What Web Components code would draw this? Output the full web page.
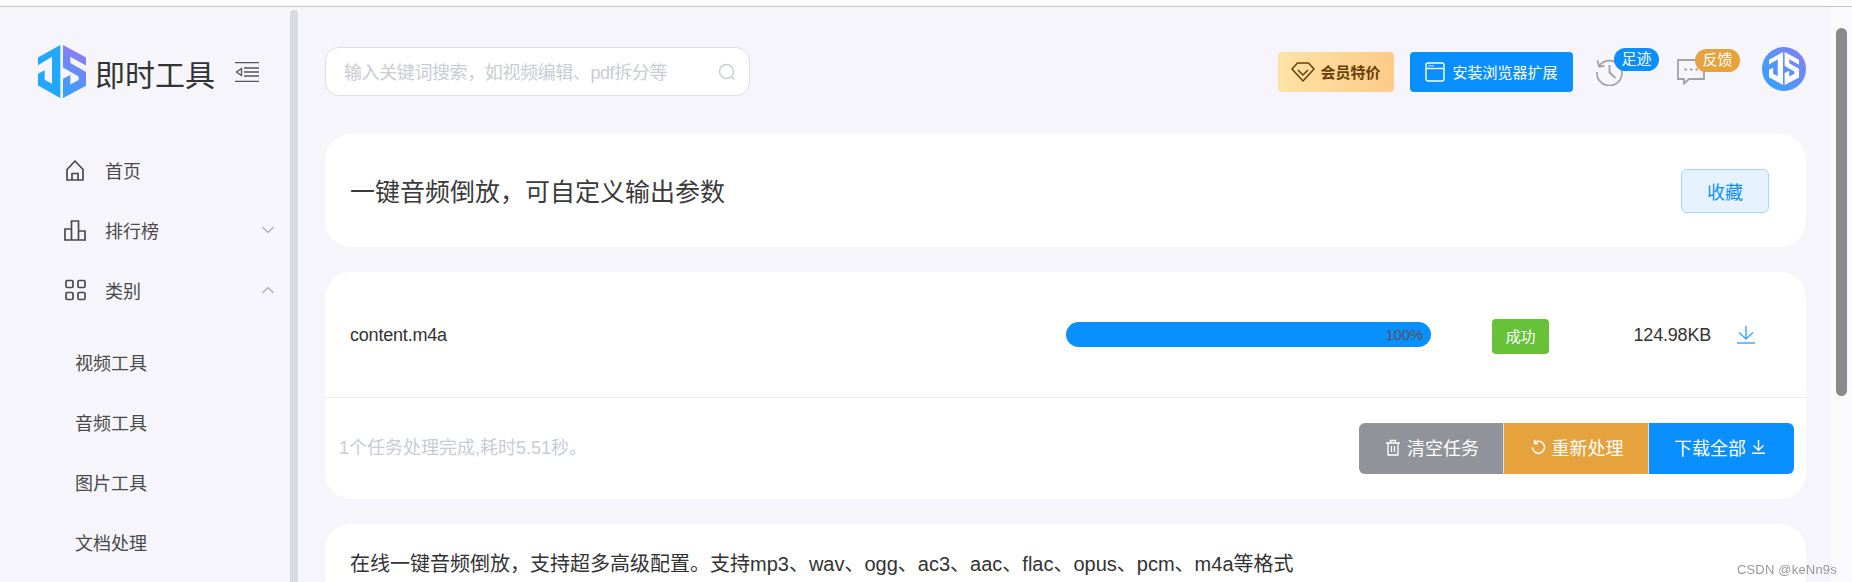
<!DOCTYPE html>
<html lang="zh-CN">
<head>
<meta charset="utf-8">
<title>一键音频倒放</title>
<style>
  html, body { margin: 0; height: 100%; overflow: hidden; }
  body { background: #f5f5fb; font-family: "Liberation Sans", "Noto Sans CJK SC", sans-serif; color: #333; }
</style>
</head>
<body>
<tool-app></tool-app>
<csdn-mark>CSDN @keNn9s</csdn-mark>

<script>
const ICONS = {
  home: '<svg width="24" height="24" viewBox="0 0 24 24" fill="none" stroke="currentColor" stroke-width="1.7"><path d="M4 11.5 12 3l8 8.5V22H4z" stroke-linejoin="round"/><path d="M9 22v-6.5h6V22"/></svg>',
  chart: '<svg width="24" height="24" viewBox="0 0 24 24" fill="none" stroke="currentColor" stroke-width="1.7"><path d="M2 11h6.5v11H2zM8.5 3h7v19h-7zM15.5 13H22v9h-6.5z"/></svg>',
  grid: '<svg width="24" height="24" viewBox="0 0 24 24" fill="none" stroke="currentColor" stroke-width="1.7"><rect x="3" y="2.5" width="7" height="7" rx="1.2"/><rect x="15" y="2.5" width="7" height="7" rx="1.2"/><rect x="3" y="14.5" width="7" height="7" rx="1.2"/><rect x="15" y="14.5" width="7" height="7" rx="1.2"/></svg>',
  down: '<svg width="12" height="8" viewBox="0 0 12 8" fill="none" stroke="#a8abb2" stroke-width="1.1"><path d="M.5 1 6 6.5 11.5 1"/></svg>',
  up: '<svg width="12" height="8" viewBox="0 0 12 8" fill="none" stroke="#a8abb2" stroke-width="1.1"><path d="M.5 7 6 1.5 11.5 7"/></svg>'
};

class JsLogo extends HTMLElement {
  constructor() {
    super();
    this.attachShadow({ mode: 'open' });
    const fill = this.hasAttribute('mono') ? '#fff' : 'url(#fade)';
    const left = this.hasAttribute('mono') ? '#fff' : '#22a7ff';
    this.shadowRoot.innerHTML = `
      <style>
        :host { display: block; line-height: 0; }
        svg { width: 100%; height: 100%; }
      </style>
      <svg viewBox="18 15 144 157" preserveAspectRatio="none">
        <defs>
          <linearGradient id="fade" gradientUnits="userSpaceOnUse" x1="90" y1="170" x2="162" y2="50">
            <stop offset="0" stop-color="#2ba5ff"/>
            <stop offset="1" stop-color="#8a7df5"/>
          </linearGradient>
        </defs>
        <path fill="${left}" d="M85 15V172L18 135V100L38 90V118L60 130V50L18 75V52Z"/>
        <path fill="${fill}" d="M93 15 162 52V76L115 50V68L162 95V136L93 172V115L115 104V132L140 119V108L93 82Z"/>
      </svg>
    `;
  }
}
customElements.define('js-logo', JsLogo);

class NavItem extends HTMLElement {
  constructor() {
    super();
    this.attachShadow({ mode: 'open' });
    const icon = ICONS[this.getAttribute('icon')];
    const arrow = ICONS[this.getAttribute('arrow')];
    this.shadowRoot.innerHTML = `
      <style>
        :host {
          display: flex;
          align-items: center;
          height: 60px;
          padding: 0 16px 0 63px;
          font-size: 18px;
          color: #4a4a4a;
        }
        :host([sub]) { padding-left: 75px; }
        .icon { width: 24px; height: 24px; margin-right: 18px; line-height: 0; }
        .label { flex: 1; }
        .arrow { line-height: 0; }
      </style>
      ${icon ? `<span class="icon">${icon}</span>` : ''}
      <span class="label"><slot></slot></span>
      ${arrow ? `<span class="arrow">${arrow}</span>` : ''}
    `;
  }
}
customElements.define('nav-item', NavItem);

class AppSidebar extends HTMLElement {
  constructor() {
    super();
    this.attachShadow({ mode: 'open' });
    this.shadowRoot.innerHTML = `
      <style>
        :host { display: flex; width: 298px; flex: none; height: 100%; }
        .body { width: 290px; overflow: hidden; }
        .brand { display: flex; align-items: center; padding: 38px 0 0 38px; height: 53px; }
        js-logo { width: 48px; height: 53px; margin-right: 9px; }
        .name { font-size: 30px; color: #333; width: 119px; white-space: nowrap; margin-top: 2px; }
        .fold { margin-left: 21px; line-height: 0; color: #555; }
        nav { margin-top: 42px; }
        .sub { margin-top: 12px; }
        .bar { width: 8px; margin-top: 3px; background: #d9dae0; border-radius: 4px 4px 0 0; }
      </style>
      <div class="body">
        <div class="brand">
          <js-logo></js-logo>
          <span class="name">即时工具</span>
          <span class="fold">
            <svg width="24" height="20" viewBox="0 0 24 20" fill="none" stroke="currentColor" stroke-width="1.3">
              <path d="M0 .7h24M0 19.3h24M9 6h15M9 10h15M9 14h15"/>
              <path d="M6.5 6.5v7L1.5 10z"/>
            </svg>
          </span>
        </div>
        <nav>
          <nav-item icon="home">首页</nav-item>
          <nav-item icon="chart" arrow="down">排行榜</nav-item>
          <nav-item icon="grid" arrow="up">类别</nav-item>
          <div class="sub">
            <nav-item sub>视频工具</nav-item>
            <nav-item sub>音频工具</nav-item>
            <nav-item sub>图片工具</nav-item>
            <nav-item sub>文档处理</nav-item>
          </div>
        </nav>
      </div>
      <div class="bar"></div>
    `;
  }
}
customElements.define('app-sidebar', AppSidebar);

class SearchBox extends HTMLElement {
  constructor() {
    super();
    this.attachShadow({ mode: 'open' });
    this.shadowRoot.innerHTML = `
      <style>
        :host {
          display: flex;
          align-items: center;
          box-sizing: border-box;
          width: 425px;
          height: 49px;
          padding: 0 13px 0 18px;
          background: #fff;
          border: 1px solid #dcdfe6;
          border-radius: 14px;
          color: #c8ccd4;
          font-size: 18px;
          letter-spacing: -.4px;
        }
        span { flex: 1; white-space: nowrap; margin-top: -1px; }
        svg { display: block; }
      </style>
      <span><slot></slot></span>
      <svg width="18" height="18" viewBox="0 0 18 18" fill="none" stroke="#c8ccd4" stroke-width="1.4">
        <circle cx="8.5" cy="8.5" r="7"/><path d="m13.5 13.5 3 3"/>
      </svg>
    `;
  }
}
customElements.define('search-box', SearchBox);

class BadgeIcon extends HTMLElement {
  constructor() {
    super();
    this.attachShadow({ mode: 'open' });
    const bg = this.getAttribute('color');
    const icon = this.getAttribute('icon') === 'history'
      ? '<svg width="27" height="28" viewBox="0 0 27 28" fill="none" stroke="#a3a3a3" stroke-width="1.8"><path d="M3.5 7.5A12.5 12.5 0 1 1 1 14"/><path d="M1.5 2.5 3 8.5l5.5-.5"/><path d="M13.5 7v7.5l6 5.5"/></svg>'
      : '<svg width="28" height="26" viewBox="0 0 28 26" fill="none" stroke="#a3a3a3" stroke-width="1.8"><path d="M1 1h26v19H12l-5 4.5V20H1z"/><path d="M7.5 10.5h2.5M13 10.5h2.5M18.5 10.5h2.5" stroke-width="2.2"/></svg>';
    this.shadowRoot.innerHTML = `
      <style>
        :host { display: block; position: relative; line-height: 0; }
        b {
          position: absolute;
          left: 18px;
          top: -10px;
          width: 45px;
          height: 23px;
          border-radius: 12px;
          background: ${bg};
          color: #fff;
          font-size: 15px;
          font-weight: 400;
          line-height: 22px;
          text-align: center;
        }
      </style>
      ${icon}
      <b><slot></slot></b>
    `;
  }
}
customElements.define('badge-icon', BadgeIcon);

class AppTopbar extends HTMLElement {
  constructor() {
    super();
    this.attachShadow({ mode: 'open' });
    this.shadowRoot.innerHTML = `
      <style>
        :host { display: flex; align-items: center; justify-content: space-between; }
        .tools { display: flex; align-items: center; }
        .btn {
          display: flex;
          align-items: center;
          justify-content: center;
          height: 40px;
          border-radius: 4px;
          font-size: 15px;
          white-space: nowrap;
        }
        .vip {
          width: 116px;
          background: linear-gradient(90deg, #fde3a7, #fdcb86);
          color: #6b3e07;
          font-weight: 700;
        }
        .ext { width: 163px; margin-left: 16px; background: #0a8fff; color: #fff; }
        svg { display: block; }
        .vip svg { margin-right: 5px; }
        .ext svg { margin-right: 7px; }
        .hist { margin-left: 23px; }
        .chat { margin-left: 54px; }
        .avatar {
          width: 44px;
          height: 44px;
          margin: -6px 0 0 57px;
          border-radius: 50%;
          background: linear-gradient(45deg, #2ba5ff, #8a7df5);
          display: flex;
          align-items: center;
          justify-content: center;
        }
        .avatar js-logo { width: 30px; height: 33px; }
      </style>
      <search-box>输入关键词搜索，如视频编辑、pdf拆分等</search-box>
      <div class="tools">
        <div class="btn vip">
          <svg width="24" height="20" viewBox="0 0 24 20" fill="none" stroke="#6b3e07" stroke-width="1.5">
            <path d="M6.5 1h11L23 7 12 19 1 7z" stroke-linejoin="round"/><path d="m7 8 5 5 5-5"/>
          </svg>
          会员特价
        </div>
        <div class="btn ext">
          <svg width="20" height="20" viewBox="0 0 20 20" fill="none" stroke="#fff" stroke-width="1.4">
            <rect x="1" y="1" width="18" height="18" rx="2"/><path d="M1 6.5h18"/><path d="M3.5 3.8h5" stroke-dasharray="1 1"/>
          </svg>
          安装浏览器扩展
        </div>
        <badge-icon class="hist" icon="history" color="#0a8fff">足迹</badge-icon>
        <badge-icon class="chat" icon="chat" color="#e6a23c">反馈</badge-icon>
        <div class="avatar"><js-logo mono></js-logo></div>
      </div>
    `;
  }
}
customElements.define('app-topbar', AppTopbar);

class ToolCard extends HTMLElement {
  constructor() {
    super();
    this.attachShadow({ mode: 'open' });
    this.shadowRoot.innerHTML = `
      <style>
        :host { display: block; background: #fff; border-radius: 26px; overflow: hidden; }
      </style>
      <slot></slot>
    `;
  }
}
customElements.define('tool-card', ToolCard);

class TitleCard extends HTMLElement {
  constructor() {
    super();
    this.attachShadow({ mode: 'open' });
    this.shadowRoot.innerHTML = `
      <style>
        :host {
          display: flex;
          align-items: center;
          justify-content: space-between;
          height: 113px;
          padding: 0 37px 0 25px;
          background: #fff;
          border-radius: 26px;
        }
        h1 { margin: -2px 0 0 0; font-size: 25px; font-weight: 400; color: #3a3a3a; }
        button {
          box-sizing: border-box;
          width: 88px;
          height: 44px;
          background: #e6f3ff;
          border: 1px solid #a3d3ff;
          border-radius: 6px;
          color: #0a8fff;
          font: inherit;
          font-size: 18px;
        }
      </style>
      <h1><slot></slot></h1>
      <button>收藏</button>
    `;
  }
}
customElements.define('title-card', TitleCard);

class TaskRow extends HTMLElement {
  constructor() {
    super();
    this.attachShadow({ mode: 'open' });
    this.shadowRoot.innerHTML = `
      <style>
        :host {
          display: flex;
          align-items: center;
          height: 125px;
          padding-left: 25px;
          border-bottom: 1px solid #ebedf2;
          font-size: 18px;
          letter-spacing: -.2px;
          color: #333;
        }
        .name { width: 716px; margin-top: 1px; }
        .bar {
          box-sizing: border-box;
          width: 365px;
          height: 25px;
          margin-top: -1px;
          padding-right: 8px;
          background: #0a8fff;
          border-radius: 13px;
          color: #555;
          font-size: 15px;
          line-height: 25px;
          text-align: right;
        }
        .tag {
          width: 57px;
          height: 35px;
          margin: 4px 0 0 61px;
          background: #67c23a;
          border-radius: 4px;
          color: #fff;
          font-size: 15px;
          line-height: 35px;
          text-align: center;
        }
        .size { width: 162px; margin-top: 1px; text-align: right; }
        svg { display: block; margin-left: 26px; }
      </style>
      <span class="name"><slot></slot></span>
      <div class="bar">100%</div>
      <div class="tag">成功</div>
      <span class="size">124.98KB</span>
      <svg width="18" height="19" viewBox="0 0 18 19" fill="none" stroke="#4aa5ff" stroke-width="1.5">
        <path d="M9 1v13M2 7.5 9 14l7-6.5M0 18h18"/>
      </svg>
    `;
  }
}
customElements.define('task-row', TaskRow);

class TaskFooter extends HTMLElement {
  constructor() {
    super();
    this.attachShadow({ mode: 'open' });
    this.shadowRoot.innerHTML = `
      <style>
        :host {
          display: flex;
          align-items: center;
          justify-content: space-between;
          height: 101px;
          padding: 0 12px 0 14px;
          font-size: 18px;
        }
        .note { color: #c8ccd4; margin-top: -6px; }
        .group { display: flex; height: 51px; margin-top: -1px; border-radius: 6px; overflow: hidden; color: #fff; }
        .group div {
          display: flex;
          align-items: center;
          justify-content: center;
          gap: 6px;
          box-sizing: border-box;
          width: 145px;
          padding-bottom: 2px;
        }
        .group div + div { border-left: 1px solid #dcdfe3; }
        .group .gray { width: 144px; padding-left: 2px; background: #909399; }
        .group .orange { padding-left: 2px; background: #e6a23c; }
        .group .blue { width: 146px; padding-right: 4px; background: #0a8fff; }
        svg { display: block; }
      </style>
      <span class="note"><slot></slot></span>
      <div class="group">
        <div class="gray">
          <svg width="16" height="17" viewBox="0 0 16 17" fill="none" stroke="#fff" stroke-width="1.3">
            <path d="M1 4h14M5.5 4V1.5h5V4M3 4v12h10V4M6.5 7v6M9.5 7v6"/>
          </svg>
          清空任务
        </div>
        <div class="orange">
          <svg width="15" height="16" viewBox="0 0 15 16" fill="none" stroke="#fff" stroke-width="1.5">
            <path d="M3.2 4A6 6 0 1 1 1.5 8.5"/><path d="M3.6 .8V4.4H7"/>
          </svg>
          重新处理
        </div>
        <div class="blue">
          下载全部
          <svg width="13" height="14" viewBox="0 0 13 14" fill="none" stroke="#fff" stroke-width="1.4">
            <path d="M6.5 0v10M1.5 5.5l5 4.8 5-4.8M0 13.3h13"/>
          </svg>
        </div>
      </div>
    `;
  }
}
customElements.define('task-footer', TaskFooter);

class DescText extends HTMLElement {
  constructor() {
    super();
    this.attachShadow({ mode: 'open' });
    this.shadowRoot.innerHTML = `
      <style>
        :host { display: block; padding: 27px 25px 24px; font-size: 20px; line-height: 26px; color: #333; white-space: nowrap; }
      </style>
      <slot></slot>
    `;
  }
}
customElements.define('desc-text', DescText);

class ToolApp extends HTMLElement {
  constructor() {
    super();
    this.attachShadow({ mode: 'open' });
    this.shadowRoot.innerHTML = `
      <style>
        :host { display: flex; flex-direction: column; height: 100vh; overflow: hidden; }
        .chrome { flex: none; height: 6px; background: #fdfdfd; border-bottom: 1px solid #c6c6c6; }
        .shell { flex: 1; display: flex; min-height: 0; }
        main { flex: 1; min-width: 0; padding: 40px 25px 0 27px; }
        title-card { margin-top: 38px; }
        .files { margin-top: 25px; }
        .desc { margin-top: 25px; }
        .page-bar { flex: none; width: 21px; box-sizing: border-box; padding: 21px 5px 0; background: #fafafc; }
        .page-bar div { height: 368px; background: #8a8a8a; border-radius: 6px; }
      </style>
      <div class="chrome"></div>
      <div class="shell">
        <app-sidebar></app-sidebar>
        <main>
          <app-topbar></app-topbar>
          <title-card>一键音频倒放，可自定义输出参数</title-card>
          <tool-card class="files">
            <task-row>content.m4a</task-row>
            <task-footer>1个任务处理完成,耗时5.51秒。</task-footer>
          </tool-card>
          <tool-card class="desc">
            <desc-text>在线一键音频倒放，支持超多高级配置。支持mp3、wav、ogg、ac3、aac、flac、opus、pcm、m4a等格式</desc-text>
          </tool-card>
        </main>
        <div class="page-bar"><div></div></div>
      </div>
    `;
  }
}
customElements.define('tool-app', ToolApp);

class CsdnMark extends HTMLElement {
  constructor() {
    super();
    this.attachShadow({ mode: 'open' });
    this.shadowRoot.innerHTML = `
      <style>
        :host {
          position: fixed;
          right: 15px;
          bottom: 5px;
          font: 13px "Liberation Sans", sans-serif;
          letter-spacing: .2px;
          color: #999;
        }
      </style>
      <slot></slot>
    `;
  }
}
customElements.define('csdn-mark', CsdnMark);
</script>
</body>
</html>
